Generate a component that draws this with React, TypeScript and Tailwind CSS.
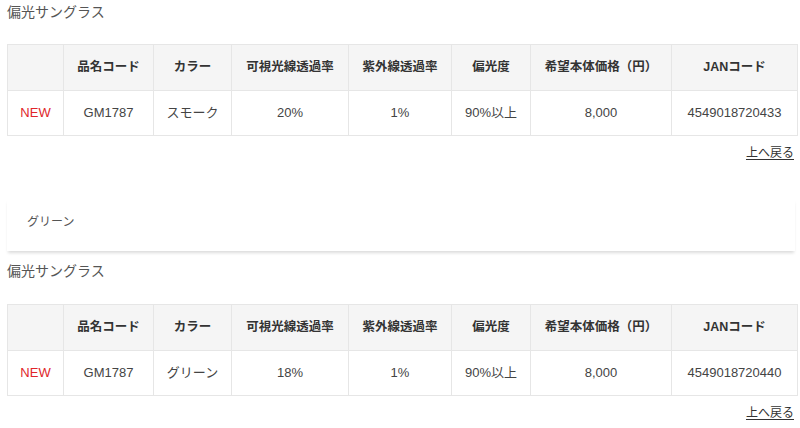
import React from "react";

const cols = [56, 90, 78, 117, 103, 79, 141, 126];
const headers = ["", "品名コード", "カラー", "可視光線透過率", "紫外線透過率", "偏光度", "希望本体価格（円）", "JANコード"];

function Section({ color, vis, jan, second }: { color: string; vis: string; jan: string; second?: boolean }) {
  const row = ["NEW", "GM1787", color, vis, "1%", "90%以上", "8,000", jan];
  return (
    <div>
      <div className="h-[24px] leading-[24px] text-[14px] text-[#555]">偏光サングラス</div>
      <table className={(second ? "mt-[21px]" : "mt-[20px]") + " border-collapse table-fixed w-[790px]"}>
        <colgroup>
          {cols.map((w, i) => (
            <col key={i} style={{ width: w }} />
          ))}
        </colgroup>
        <thead>
          <tr className="h-[46px] bg-[#f5f5f5]">
            {headers.map((h, i) => (
              <th key={i} className="border border-[#e6e6e6] text-center font-bold text-[12.5px] text-[#333] p-0">
                {h}
              </th>
            ))}
          </tr>
        </thead>
        <tbody>
          <tr className="h-[45px] bg-white">
            {row.map((c, i) => (
              <td
                key={i}
                className={
                  "border border-[#e6e6e6] text-center text-[13px] p-0 " +
                  (i === 0 ? "text-[#e0262a]" : "text-[#444]")
                }
              >
                {c}
              </td>
            ))}
          </tr>
        </tbody>
      </table>
      <div className="flex justify-end mt-[8px] pr-[3px]">
        <span className="text-[12px] leading-[18px] text-[#333] underline underline-offset-2">上へ戻る</span>
      </div>
    </div>
  );
}

export default function App() {
  return (
    <div
      className="w-[800px] h-[428px] overflow-hidden bg-white pl-[7px] pr-[3px]"
      style={{ fontFamily: '"Liberation Sans", "Noto Sans CJK JP", sans-serif' }}
    >
      <Section color="スモーク" vis="20%" jan="4549018720433" />
      <div className="mt-[37px] w-[788px] bg-white pl-[20px] pt-[10px] pb-[18px] shadow-[0_3px_3px_-1px_rgba(0,0,0,0.14)]">
        <span className="text-[12px] leading-[20px] text-[#555]">グリーン</span>
      </div>
      <div className="mt-[8px]">
        <Section color="グリーン" vis="18%" jan="4549018720440" second />
      </div>
    </div>
  );
}
